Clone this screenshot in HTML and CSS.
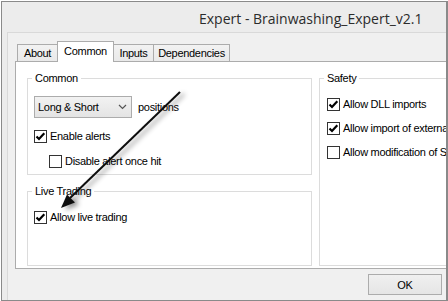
FILE: index.html
```html
<!DOCTYPE html>
<html lang="en">
<head>
  <meta charset="UTF-8" />
  <title>Expert - Brainwashing_Expert_v2.1</title>
  <link rel="stylesheet" href="styles.css">
</head>
<body>
  <div class="window">
    <div class="title-bar">Expert - Brainwashing_Expert_v2.1</div>
    <div class="client">
      <div class="tabs">
        <div class="tab tab-about">About</div>
        <div class="tab tab-common selected">Common</div>
        <div class="tab tab-inputs">Inputs</div>
        <div class="tab tab-deps">Dependencies</div>
      </div>
      <div class="panel">
        <div class="col-left">
          <fieldset class="group group-common">
            <legend>Common</legend>
            <div class="group-body">
              <div class="combo-row">
                <div class="combo">
                  <span>Long &amp; Short</span>
                  <svg width="9" height="6" viewBox="0 0 9 6"><path d="M1 1 L4.5 4.5 L8 1" fill="none" stroke="#555" stroke-width="1.2"/></svg>
                </div>
                <span class="after-combo">positions</span>
              </div>
              <div class="check">
                <span class="box"><svg width="11" height="11" viewBox="0 0 11 11"><path d="M1.5 5.5 L4 8 L9.3 2.2" fill="none" stroke="#000" stroke-width="2.2"/></svg></span>
                <span>Enable alerts</span>
              </div>
              <div class="check indent">
                <span class="box"></span>
                <span>Disable alert once hit</span>
              </div>
            </div>
          </fieldset>
          <fieldset class="group group-live">
            <legend>Live Trading</legend>
            <div class="group-body">
              <div class="check">
                <span class="box"><svg width="11" height="11" viewBox="0 0 11 11"><path d="M1.5 5.5 L4 8 L9.3 2.2" fill="none" stroke="#000" stroke-width="2.2"/></svg></span>
                <span>Allow live trading</span>
              </div>
            </div>
          </fieldset>
        </div>
        <fieldset class="group group-safety">
          <legend>Safety</legend>
          <div class="group-body">
            <div class="check">
              <span class="box"><svg width="11" height="11" viewBox="0 0 11 11"><path d="M1.5 5.5 L4 8 L9.3 2.2" fill="none" stroke="#000" stroke-width="2.2"/></svg></span>
              <span>Allow DLL imports</span>
            </div>
            <div class="check">
              <span class="box"><svg width="11" height="11" viewBox="0 0 11 11"><path d="M1.5 5.5 L4 8 L9.3 2.2" fill="none" stroke="#000" stroke-width="2.2"/></svg></span>
              <span>Allow import of external experts</span>
            </div>
            <div class="check">
              <span class="box"></span>
              <span>Allow modification of Signals settings</span>
            </div>
          </div>
        </fieldset>
      </div>
      <div class="footer">
        <button class="btn">OK</button>
      </div>
    </div>
  </div>

  <svg class="arrow" width="448" height="301" viewBox="0 0 448 301">
    <defs>
      <filter id="shadow" x="-30%" y="-30%" width="160%" height="160%">
        <feDropShadow dx="4" dy="2" stdDeviation="2.5" flood-color="#000" flood-opacity="0.45"/>
      </filter>
    </defs>
    <g filter="url(#shadow)">
      <line x1="180" y1="92" x2="70" y2="198" stroke="#111" stroke-width="2"/>
      <polygon points="61,208 75,202.5 67,194.5" fill="#111"/>
    </g>
  </svg>
</body>
</html>
```

FILE: styles.css
```css
html, body {
  margin: 0;
  height: 100%;
  overflow: hidden;
}
body {
  position: relative;
  background: #fff;
  font-family: "Liberation Sans", Arial, sans-serif;
  font-size: 11px;
  letter-spacing: -0.3px;
  color: #000;
}
.window {
  margin: 1px 0 0 1px;
  width: 447px;
  height: 300px;
  box-sizing: border-box;
  border: 1px solid #8a8a8a;
  border-right-width: 2px;
  background: #ececec;
  padding-left: 5px;
  overflow: hidden;
}
.title-bar {
  height: 30px;
  box-sizing: border-box;
  padding: 3px 0 0 192px;
  font-family: "Open Sans", sans-serif;
  font-size: 14px;
  letter-spacing: 0;
  line-height: 27px;
  color: #2b2b2b;
  white-space: nowrap;
}
.client {
  height: 268px;
  box-sizing: border-box;
  border-top: 1px solid #d9d9d9;
  border-left: 1px solid #d9d9d9;
  background: #f0f0f0;
  padding: 8px 0 0 7px;
  overflow: hidden;
}
.tabs {
  display: flex;
  align-items: flex-end;
  height: 20px;
  padding-left: 2px;
}
.tab {
  box-sizing: border-box;
  height: 17px;
  border: 1px solid #acacac;
  border-bottom: 0;
  background: linear-gradient(#f2f2f2, #e9e9e9);
  margin-left: -1px;
  text-align: center;
  line-height: 16px;
  white-space: nowrap;
}
.tab:first-child {
  margin-left: 0;
}
.tab-about { width: 41px; }
.tab-common { width: 57px; }
.tab-inputs { width: 41px; }
.tab-deps { width: 77px; }
.tab.selected {
  height: 21px;
  margin-bottom: -1px;
  background: #fff;
  line-height: 18px;
  position: relative;
  z-index: 1;
}
.panel {
  box-sizing: border-box;
  width: 440px;
  height: 208px;
  border: 1px solid #acacac;
  background: #fff;
  padding: 9px 0 0 11px;
  display: flex;
  align-items: flex-start;
  gap: 7px;
}
.col-left {
  display: flex;
  flex-direction: column;
  gap: 9px;
  width: 285px;
  flex: none;
}
.group {
  margin: 0;
  padding: 0;
  min-width: 0;
  box-sizing: border-box;
  border: 1px solid #dcdcdc;
}
.group legend {
  margin-left: 4px;
  padding: 0 3px;
  line-height: 15px;
}
.group-common { height: 104px; }
.group-live { height: 82px; }
.group-safety {
  width: 200px;
  height: 195px;
  flex: none;
}
.group-body {
  padding-left: 6px;
  white-space: nowrap;
}
.group-safety .group-body {
  padding-left: 7px;
}
.combo-row {
  display: flex;
  align-items: center;
  margin-top: 10px;
}
.combo {
  box-sizing: border-box;
  width: 98px;
  height: 22px;
  border: 1px solid #acacac;
  background: linear-gradient(#f2f2f2, #e4e4e4);
  display: flex;
  align-items: center;
  justify-content: space-between;
  padding: 0 4px 0 3px;
}
.combo svg {
  display: block;
}
.after-combo {
  margin-left: 6px;
}
.check {
  display: flex;
  align-items: center;
  gap: 3px;
  line-height: 13px;
  margin-top: 12px;
}
.check.indent {
  margin-left: 15px;
}
.group-safety .check {
  margin-top: 11px;
}
.group-safety .check:first-child {
  margin-top: 12px;
}
.box {
  box-sizing: border-box;
  width: 13px;
  height: 13px;
  border: 1px solid #333;
  background: #fff;
  flex: none;
}
.box svg {
  display: block;
}
.footer {
  display: flex;
  justify-content: flex-end;
  padding: 5px 4px 0 0;
}
.btn {
  box-sizing: border-box;
  width: 74px;
  height: 21px;
  padding: 0;
  border: 1px solid #acacac;
  background: linear-gradient(#f0f0f0, #e5e5e5);
  font: inherit;
  letter-spacing: inherit;
  color: #000;
}
.arrow {
  position: absolute;
  left: 0;
  top: 0;
  pointer-events: none;
}
```
